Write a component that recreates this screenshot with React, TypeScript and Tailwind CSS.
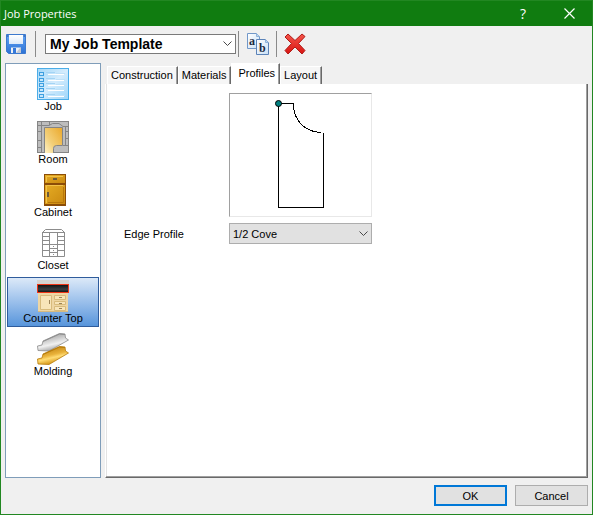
import { useState } from "react";
import type { ReactNode } from "react";

const outline = "#8c8c8c";

function JobIcon() {
  return (
    <svg width="32" height="32" viewBox="0 0 32 32" aria-hidden="true">
      <defs>
        <linearGradient id="job" x1="0" y1="0" x2="1" y2="1">
          <stop offset="0" stopColor="#a4d8f8" />
          <stop offset=".5" stopColor="#d4ecfd" />
          <stop offset="1" stopColor="#9dd6fa" />
        </linearGradient>
      </defs>
      <rect x=".5" y=".5" width="31" height="31" fill="url(#job)" stroke="#4bade8" />
      <g shapeRendering="crispEdges">
        {[4, 10, 15, 20, 26].map((y) => (
          <g key={y}>
            <rect x="2" y={y} width="5" height="4" fill="#3d9fe0" />
            <rect x="3" y={y + 1} width="3" height="2" fill="#c4e6fb" />
            <rect x="9" y={y} width="9" height="1" fill="#a4d4f4" />
            <rect x="11" y={y + 2} width="16" height="1" fill="#fff" />
            <rect x="19" y={y + 1} width="9" height="1" fill="#bfe1f8" />
          </g>
        ))}
      </g>
    </svg>
  );
}

function RoomIcon() {
  return (
    <svg width="32" height="32" viewBox="0 0 32 32" aria-hidden="true">
      <defs>
        <linearGradient id="room" x1="1" y1="0" x2="0" y2="1">
          <stop offset="0" stopColor="#eba92c" />
          <stop offset=".6" stopColor="#f3cf78" />
          <stop offset="1" stopColor="#fff3c8" />
        </linearGradient>
      </defs>
      <rect x=".5" y=".5" width="31" height="31" fill="#bdbdbd" stroke="#858585" />
      <path d="M8 7H25V25H19Q16 25 16 28V32H8Z" fill="url(#room)" />
      <path
        d="M7.500 31V6.500H25.500V24.500H19.500Q16.500 24.500 16.500 27.500V31M4.500 0V31M0 4.500H12L15.500 2.500H22L26 5.500H31M0 10.500H4M0 19.500H4M0 26.500H4M12.500 0V4M28.500 5V24M28 10.500H31M28 17.500H31M26 24.500H31"
        fill="none"
        stroke="#858585"
      />
    </svg>
  );
}

function CabinetIcon() {
  return (
    <svg width="32" height="32" viewBox="0 0 32 32" aria-hidden="true">
      <defs>
        <linearGradient id="cabinet" x1="0" y1="0" x2="1" y2="1">
          <stop offset="0" stopColor="#e5ac24" />
          <stop offset="1" stopColor="#ca8910" />
        </linearGradient>
      </defs>
      <rect x="7" width="22" height="32" fill="#8b4d08" />
      <rect x="8" y="1" width="20" height="8" fill="url(#cabinet)" />
      <rect x="8" y="11" width="20" height="19" fill="url(#cabinet)" />
      <path d="M9.500 8V2.500H26M9.500 29V11.500H26" fill="none" stroke="#f2c248" />
      <path d="M26.500 13V28.500H11" fill="none" stroke="#b8770c" />
      <rect x="16" y="4" width="4" height="2" fill="#6d5a3a" />
      <rect x="10" y="18" width="2" height="5" fill="#6d5a3a" />
    </svg>
  );
}

function ClosetIcon() {
  return (
    <svg width="32" height="32" viewBox="0 0 32 32" aria-hidden="true">
      <path
        d="M5.500 29.500V5.500L8.500 2.500H24.500L27.500 5.500V29.500ZM5 5.500H28M12.500 5V29M20.500 5V29M5 9.500H12M5 13.500H12M5 17.500H28M5 23.500H12M20 9.500H28M20 13.500H28M20 23.500H28M12 21.500H20M12 25.500H20"
        fill="#fff"
        stroke={outline}
      />
      <path d="M16 19.500H17M16 23.500H17M16 27.500H17" stroke={outline} />
    </svg>
  );
}

function CounterTopIcon() {
  return (
    <svg width="32" height="32" viewBox="0 0 32 32" aria-hidden="true">
      <defs>
        <linearGradient id="stone" x1="0" y1="0" x2="0" y2="1">
          <stop offset="0" stopColor="#111" />
          <stop offset=".6" stopColor="#393d40" />
          <stop offset="1" stopColor="#111" />
        </linearGradient>
      </defs>
      <rect width="32" height="5" fill="#d5d4d2" />
      <rect x="1" y="13" width="30" height="19" fill="#eed6a4" />
      <rect x=".5" y="4.500" width="31" height="8" fill="url(#stone)" stroke="#ef3516" />
      <path
        d="M3.500 15.500H14.500V29.500H3.500ZM17.500 15.500H28.500V19.500H17.500ZM17.500 21.500H28.500V24.500H17.500ZM17.500 26.500H28.500V30.500H17.500Z"
        fill="#f8e5b9"
        stroke="#d8bb7c"
      />
      <path d="M12.500 20V24M22 17.500H25M22 23.500H25M22 28.500H25" stroke="#9c8459" />
      <path d="M1 31.500H31" stroke="#d6ba80" />
    </svg>
  );
}

function MoldingIcon() {
  return (
    <svg width="32" height="32" viewBox="0 0 32 32" aria-hidden="true">
      <defs>
        <linearGradient id="silver" x1=".3" y1="0" x2=".7" y2="1">
          <stop offset=".2" stopColor="#b4b4b4" />
          <stop offset=".45" stopColor="#dadada" />
          <stop offset=".6" stopColor="#f0f0f0" />
          <stop offset=".9" stopColor="#a4a4a4" />
        </linearGradient>
        <linearGradient id="gold" x1=".3" y1="0" x2=".7" y2="1">
          <stop offset=".2" stopColor="#cf9420" />
          <stop offset=".45" stopColor="#e9b23a" />
          <stop offset=".6" stopColor="#ffdc74" />
          <stop offset=".9" stopColor="#d2900f" />
        </linearGradient>
      </defs>
      <path d="M6 8L22.500 .5L28 1L28.500 5L31.500 7L12 18L1 17.500L.5 13L5 12Z" fill="url(#silver)" stroke="#8b8b8b" strokeWidth=".8" />
      <path d="M6 8.500L22.500 1L28 1.500" stroke="#8f8f8f" fill="none" />
      <path d="M6 21L22.500 13.500L28 14L28.500 18L31.500 20L12 31.500L1 31L.5 26L5 25Z" fill="url(#gold)" stroke="#b77c0c" strokeWidth=".8" />
      <path d="M6 21.500L22.500 14L28 14.500" stroke="#b77c0c" fill="none" />
    </svg>
  );
}

function SaveIcon() {
  return (
    <svg width="20" height="20" viewBox="0 0 20 20" aria-hidden="true">
      <defs>
        <linearGradient id="disk" x1="0" y1="0" x2="0" y2="1">
          <stop offset="0" stopColor="#63a5f5" />
          <stop offset="1" stopColor="#2c72d5" />
        </linearGradient>
        <linearGradient id="disklabel" x1="0" y1="0" x2="0" y2="1">
          <stop offset="0" stopColor="#fff" />
          <stop offset="1" stopColor="#dce9f8" />
        </linearGradient>
      </defs>
      <path d="M.5.500H19.500V19.500H2.500L.5 17.500Z" fill="url(#disk)" stroke="#3c79ce" />
      <rect x="3" y="1" width="14" height="9" fill="url(#disklabel)" />
      <path d="M1 2H2.500M17.500 2H19" stroke="#234d91" />
      <path d="M5 19V13.500H15V19Z" fill="#edf0f5" />
      <rect x="7" y="14" width="3" height="5" fill="#3579da" />
      <path d="M10 19L14 14H15V19Z" fill="#c3c9d3" />
    </svg>
  );
}

function RenameIcon() {
  return (
    <svg width="22" height="22" viewBox="0 0 22 22" aria-hidden="true">
      <defs>
        <linearGradient id="sheet" x1="0" y1="0" x2="1" y2="1">
          <stop offset="0" stopColor="#fff" />
          <stop offset="1" stopColor="#c9dff5" />
        </linearGradient>
      </defs>
      <path d="M.5.500H9.500L12.500 3.500V15.500H.5Z" fill="url(#sheet)" stroke="#7197c8" />
      <path d="M9.500.500V3.500H12.500" fill="#bfd7ef" stroke="#8eb2da" />
      <text x="2" y="12" fontFamily="Liberation Serif, serif" fontSize="12" fontWeight="bold" fill="#1b2940">a</text>
      <path d="M9.500 6.500H18.500L21.500 9.500V21.500H9.500Z" fill="url(#sheet)" stroke="#5c83b8" />
      <path d="M18.500 6.500V9.500H21.500" fill="#bfd7ef" stroke="#8eb2da" />
      <text x="12" y="19" fontFamily="Liberation Serif, serif" fontSize="12" fontWeight="bold" fill="#1b2940">b</text>
    </svg>
  );
}

function DeleteIcon() {
  return (
    <svg width="22" height="22" viewBox="0 0 22 22" aria-hidden="true">
      <defs>
        <linearGradient id="cross" x1="0" y1="0" x2="0" y2="1">
          <stop offset="0" stopColor="#f4554a" />
          <stop offset="1" stopColor="#d91411" />
        </linearGradient>
      </defs>
      <path
        d="M4 1L11 7.500L18 1L21 3.500L14.500 10.500L21 17.500L18 21L11 14L4 21L1 17.500L7.500 10.500L1 4Z"
        fill="url(#cross)"
        stroke="#b01b17"
        strokeLinejoin="round"
      />
    </svg>
  );
}

function Chevron() {
  return (
    <svg className="pointer-events-none absolute inset-y-0 right-1 my-auto" width="9" height="6" viewBox="0 0 9 6" aria-hidden="true">
      <path d="M.5.500L4.500 4.500L8.500.500" fill="none" stroke="#484848" />
    </svg>
  );
}

function ProfileDrawing() {
  return (
    <svg width="141" height="122" viewBox="0 0 141 122" role="img" aria-label="Edge profile shape">
      <path d="M93.500 39V113.500H48.500V9.500H63.500V13" fill="none" stroke="#000" shapeRendering="crispEdges" />
      <path d="M63.500 13C65 27 75 38 91 38.500" fill="none" stroke="#000" shapeRendering="crispEdges" />
      <circle cx="48.500" cy="9.500" r="3" fill="#008080" stroke="#000" />
    </svg>
  );
}

const sections: { name: string; icon: ReactNode }[] = [
  { name: "Job", icon: <JobIcon /> },
  { name: "Room", icon: <RoomIcon /> },
  { name: "Cabinet", icon: <CabinetIcon /> },
  { name: "Closet", icon: <ClosetIcon /> },
  { name: "Counter Top", icon: <CounterTopIcon /> },
  { name: "Molding", icon: <MoldingIcon /> },
];

const tabs = ["Construction", "Materials", "Profiles", "Layout"];

function Separator() {
  return <div className="h-[26px] w-px bg-[#8a8a8a]" />;
}

export default function App() {
  const [section, setSection] = useState("Counter Top");
  const [tab, setTab] = useState("Profiles");

  return (
    <div className="flex min-h-screen flex-col border border-t-0 border-[#228722] bg-[#f0f0f0] font-['Liberation_Sans',Arial,sans-serif] text-[11px] leading-3 text-black">
      <header className="flex h-[26px] items-center border-t border-[#228722] bg-[#107c10] pl-[3px] text-white">
        <h1 className="flex-1 font-['Open_Sans',sans-serif] text-[11px] leading-4">Job Properties</h1>
        <button aria-label="Help" className="flex h-full w-[46px] items-center justify-center font-['Open_Sans',sans-serif] text-[14px]">?</button>
        <button aria-label="Close" className="flex h-full w-[46px] items-center justify-center">
          <svg width="11" height="11" viewBox="0 0 11 11" aria-hidden="true">
            <path d="M.5.500L10.500 10.500M10.500.500L.5 10.500" stroke="#fff" strokeWidth="1.200" />
          </svg>
        </button>
      </header>

      <div className="flex h-9 items-center pl-[5px]">
        <button aria-label="Save" className="mr-[9px]"><SaveIcon /></button>
        <Separator />
        <div className="relative mr-0.5 ml-[9px] h-5 w-[191px]">
          <select aria-label="Template" className="h-full w-full appearance-none border border-[#7a7a7a] bg-white pl-1 text-[14px] leading-4 font-bold">
            <option>My Job Template</option>
          </select>
          <Chevron />
        </div>
        <Separator />
        <button aria-label="Rename" className="mr-[7px] ml-2"><RenameIcon /></button>
        <Separator />
        <button aria-label="Delete" className="ml-[7px]"><DeleteIcon /></button>
      </div>

      <main className="flex flex-1 gap-1 pr-1 pl-1">
        <nav aria-label="Sections" className="mt-px flex w-24 flex-col gap-[3px] border border-[#7f9db9] bg-white p-px">
          {sections.map(({ name, icon }) => (
            <button
              key={name}
              onClick={() => setSection(name)}
              aria-current={section === name ? "page" : undefined}
              className={`flex h-[50px] flex-col items-center border pt-0.5 whitespace-nowrap ${
                section === name ? "border-[#2f5c9c] bg-linear-to-b from-[#dce9f8] to-[#5795db]" : "border-transparent"
              }`}
            >
              {icon}
              <span>{name}</span>
            </button>
          ))}
        </nav>

        <section className="mt-px flex min-w-0 flex-1 flex-col">
          <div role="tablist" className="flex h-[21px] items-end pl-0.5">
            {tabs.map((name) => (
              <button
                key={name}
                role="tab"
                aria-selected={tab === name}
                onClick={() => setTab(name)}
                className={`border-t border-r border-l border-t-white border-r-[#696969] border-l-white shadow-[inset_-1px_0_0_#a0a0a0] ${
                  tab === name ? "h-[21px] bg-white pr-1 pb-0.5 pl-1.5" : "h-[18px] bg-[#f6f6f6] pr-1 pb-0.5 pl-[3px]"
                }`}
              >
                {name}
              </button>
            ))}
          </div>
          <div role="tabpanel" className="flex-1 border-r border-b border-l border-r-[#696969] border-b-[#696969] border-l-white bg-white pt-[9px] pl-[18px] shadow-[inset_-1px_-1px_0_#a0a0a0,inset_1px_0_0_#e3e3e3]">
            <div className="grid grid-cols-[105px_143px] items-center gap-y-1.5">
              <div className="col-start-2 border border-t-[#a0a0a0] border-r-[#e8e8e8] border-b-[#e8e8e8] border-l-[#a0a0a0]">
                <ProfileDrawing />
              </div>
              <label htmlFor="edge-profile">Edge Profile</label>
              <div className="relative h-[21px]">
                <select id="edge-profile" className="h-full w-full appearance-none border border-[#adadad] bg-[#e1e1e1] pl-[3px]">
                  <option>1/2 Cove</option>
                </select>
                <Chevron />
              </div>
            </div>
          </div>
        </section>
      </main>

      <footer className="flex justify-end gap-2 px-1 pt-[7px] pb-2">
        <button className="h-[21px] w-[73px] border-2 border-[#0078d7] bg-[#e1e1e1]">OK</button>
        <button className="h-[21px] w-[73px] border border-[#adadad] bg-[#e1e1e1]">Cancel</button>
      </footer>
    </div>
  );
}
